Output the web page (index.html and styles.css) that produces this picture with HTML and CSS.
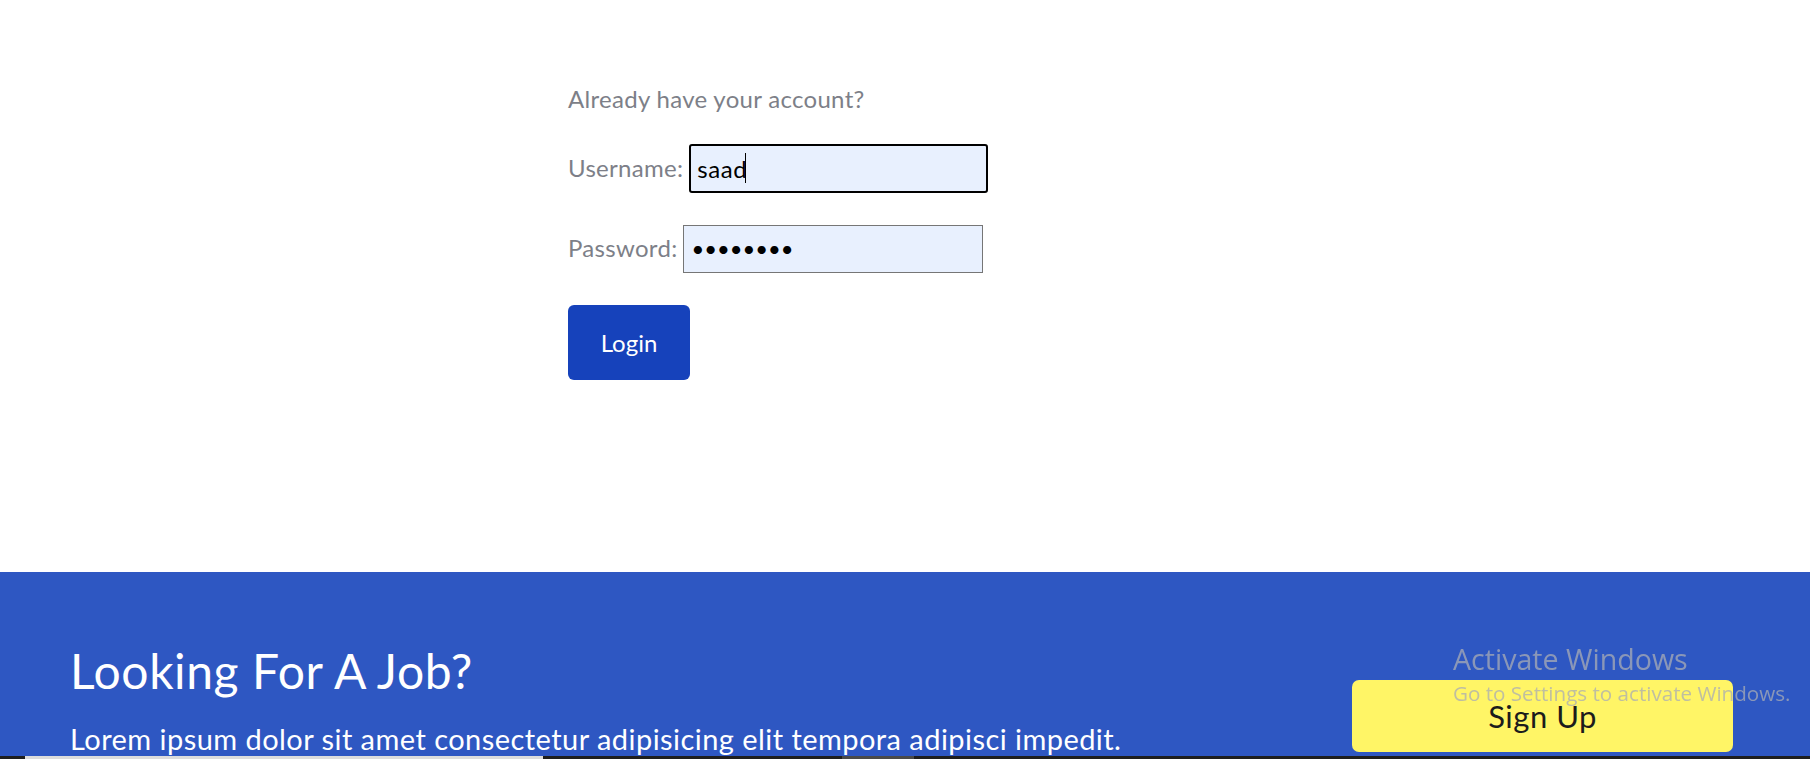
FILE: index.html
```html
<!DOCTYPE html>
<html lang="en">
<head>
<meta charset="utf-8">
<title>Login</title>
<link rel="stylesheet" href="styles.css">
</head>
<body>
<main class="login">
  <form class="login-form">
    <p class="intro">Already have your account?</p>
    <div class="field">
      <label class="label" for="username">Username:</label>
      <span class="input-wrap">
        <input class="input input-focused" id="username" type="text" value="saad">
        <span class="caret"></span>
      </span>
    </div>
    <div class="field field-password">
      <label class="label" for="password">Password:</label>
      <input class="input" id="password" type="password" value="saad1234">
    </div>
    <button class="btn-login" type="button">Login</button>
  </form>
</main>
<footer class="cta">
  <div class="cta-text">
    <h2 class="cta-title">Looking For A Job?</h2>
    <p class="cta-lead">Lorem ipsum dolor sit amet consectetur adipisicing elit tempora adipisci impedit.</p>
  </div>
  <button class="btn-signup" type="button">Sign Up</button>
</footer>
<div class="watermark">
  <div class="wm-title">Activate Windows</div>
  <div class="wm-sub">Go to Settings to activate Windows.</div>
</div>
<div class="scrollbar">
  <span class="sb-thumb"></span>
  <span class="sb-mark"></span>
</div>
</body>
</html>
```
FILE: styles.css
```css
html, body {
  margin: 0;
  padding: 0;
  overflow: hidden;
  background: #ffffff;
  font-family: "Lato", "Open Sans", sans-serif;
}

.login {
  width: 674px;
  margin: 0 auto;
  padding-top: 85px;
  height: 572px;
  box-sizing: border-box;
}

.login-form {
  display: flex;
  flex-direction: column;
  align-items: flex-start;
}

.intro {
  margin: 0;
  font-size: 24px;
  letter-spacing: 0.3px;
  line-height: 1.2;
  color: #7d7f88;
}

.field {
  display: flex;
  align-items: center;
  gap: 6px;
  margin-top: 30px;
}

.field-password {
  margin-top: 32px;
}

.label {
  font-size: 24px;
  letter-spacing: 0.3px;
  line-height: 1.2;
  color: #7d7f88;
}

.input-wrap {
  position: relative;
  display: block;
}

.input {
  display: block;
  box-sizing: border-box;
  width: 300px;
  height: 48px;
  margin: 0;
  padding: 0 7px;
  border: 1px solid #767676;
  border-radius: 0;
  background: #e8f0fe;
  font-family: "Lato", sans-serif;
  font-size: 24px;
  letter-spacing: 0.6px;
  color: #000000;
  outline: none;
}

.input-focused {
  width: 299px;
  height: 49px;
  border: 2px solid #000000;
  border-radius: 3px;
  padding: 0 6px;
}

.caret {
  position: absolute;
  left: 56px;
  top: 9px;
  width: 1px;
  height: 30px;
  background: #000000;
}

#password {
  font-size: 22px;
  letter-spacing: 0;
}

.btn-login {
  margin-top: 32px;
  width: 122px;
  height: 75px;
  border: none;
  border-radius: 6px;
  background: #1642bb;
  color: #ffffff;
  font-family: "Lato", sans-serif;
  font-size: 24px;
  padding: 0;
}

.cta {
  display: flex;
  justify-content: space-between;
  align-items: flex-start;
  background: #2e57c2;
  padding: 70px 77px 0 70px;
  height: 300px;
}

.cta-title {
  margin: 0;
  font-size: 48px;
  letter-spacing: 0.6px;
  font-weight: 400;
  line-height: 1.2;
  color: #ffffff;
}

.cta-lead {
  margin: 22px 0 0;
  font-size: 29px;
  letter-spacing: 0.45px;
  line-height: 1.15;
  color: #ffffff;
}

.btn-signup {
  margin-top: 38px;
  width: 381px;
  height: 72px;
  border: none;
  border-radius: 7px;
  background: #fff566;
  color: #1c1c1c;
  font-family: "Lato", sans-serif;
  font-size: 31px;
  letter-spacing: 0.5px;
  padding: 0;
}

.watermark {
  position: fixed;
  left: 1453px;
  top: 641px;
  color: rgba(170, 172, 180, 0.75);
  font-family: "Open Sans", "Noto Sans", sans-serif;
  pointer-events: none;
}

.wm-title {
  font-size: 28.6px;
  line-height: 36px;
}

.wm-sub {
  font-size: 20.6px;
  line-height: 32px;
}

.scrollbar {
  position: fixed;
  left: 0;
  right: 0;
  bottom: 0;
  height: 3px;
  background: #1e1e1e;
}

.sb-thumb {
  position: absolute;
  left: 25px;
  width: 518px;
  top: 0;
  bottom: 0;
  background: #dcdcdc;
}

.sb-mark {
  position: absolute;
  left: 842px;
  width: 72px;
  top: 0;
  bottom: 0;
  background: #4a4a4a;
}
```
